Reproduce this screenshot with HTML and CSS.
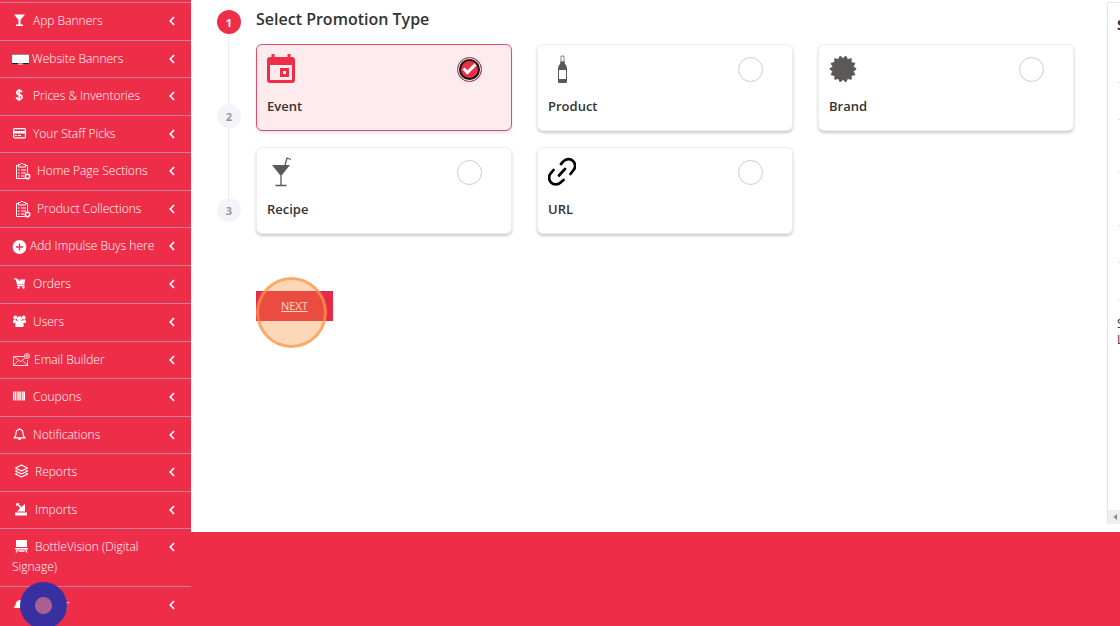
FILE: index.html
```html
<!DOCTYPE html>
<html lang="en">
<head>
  <meta charset="UTF-8">
  <meta name="viewport" content="width=device-width, initial-scale=1.0">
  <title>Promotions</title>
  <link rel="stylesheet" href="styles.css">
</head>
<body>
  <svg class="defs" aria-hidden="true">
    <symbol id="chevron" viewBox="0 0 6 10"><path d="M5 1 1.3 5 5 9" fill="none" stroke="currentColor" stroke-width="1.7"/></symbol>
    <symbol id="clipboard" viewBox="0 0 22 18">
      <g fill="none" stroke="currentColor">
        <path d="M13 16.5H4.5V3.5h2M13 3.5h2.500V11M6.500 5V2.500H8.500L10 1l1.500 1.500h2V5z"/>
        <path d="M6 8h1.500M9 8h5M6 11h1.500M9 11h5M6 14h1.500M9 14h3"/>
        <circle cx="15.500" cy="14.500" r="2.200" stroke-width="1.500"/>
      </g>
    </symbol>
  </svg>

  <div class="layout">
    <nav class="sidebar">
      <ul class="menu">
        <li><a href="#">
          <span class="label"><svg class="icon" viewBox="0 0 15 14"><path d="M2 1.500h11L8.500 7v4.500H11V13H4v-1.500h2.500V7z" fill="currentColor"/></svg>App Banners</span>
          <svg class="chevron"><use href="#chevron"/></svg></a></li>
        <li><a href="#">
          <span class="label"><svg class="icon icon-wide" viewBox="0 0 18 14"><path d="M0 3h17v10H0z" fill="#2b1a20"/><path d="M0 3.500h17v8.500H0z" fill="#fff"/><path d="M6 13h5" stroke="#fff"/></svg>Website Banners</span>
          <svg class="chevron"><use href="#chevron"/></svg></a></li>
        <li><a href="#">
          <span class="label"><svg class="icon" viewBox="0 0 15 14"><path d="M10 4.300C9.500 3 8.600 2.500 7.300 2.500c-3.300 0-3.300 3.700 0 4.200 3.500.6 3.500 4.500 0 4.500-1.500 0-2.600-.6-3-2M7.300 1v12" fill="none" stroke="currentColor" stroke-width="1.700"/></svg>Prices &amp; Inventories</span>
          <svg class="chevron"><use href="#chevron"/></svg></a></li>
        <li><a href="#">
          <span class="label"><svg class="icon" viewBox="0 0 15 14"><rect x="1.600" y="2.600" width="11.800" height="9.300" rx="1" fill="none" stroke="currentColor" stroke-width="1.200"/><path d="M1.500 5h12v2.500h-12zM3 9h2v1H3zM6 9h3v1H6z" fill="currentColor"/></svg>Your Staff Picks</span>
          <svg class="chevron"><use href="#chevron"/></svg></a></li>
        <li><a href="#">
          <span class="label"><svg class="icon icon-list"><use href="#clipboard"/></svg>Home Page Sections</span>
          <svg class="chevron"><use href="#chevron"/></svg></a></li>
        <li><a href="#">
          <span class="label"><svg class="icon icon-list"><use href="#clipboard"/></svg>Product Collections</span>
          <svg class="chevron"><use href="#chevron"/></svg></a></li>
        <li><a href="#">
          <span class="label"><svg class="icon icon-add" viewBox="0 0 16 14"><circle cx="7.500" cy="7" r="6.900" fill="currentColor"/><path d="M7.500 3.500v7M4 7h7" stroke="#ee2e49" stroke-width="1.300"/></svg>Add Impulse Buys here</span>
          <svg class="chevron"><use href="#chevron"/></svg></a></li>
        <li class="roomy"><a href="#">
          <span class="label"><svg class="icon" viewBox="0 0 15 14"><path d="M2 2.800h2.300L6 9.700h6.500" fill="none" stroke="currentColor" stroke-width="1.300"/><path d="M4.800 3.500h2.400V5h1V3.500h5L12.300 8.500H5.800z" fill="currentColor"/><circle cx="6.500" cy="11.600" r="1.200" fill="currentColor"/><circle cx="11.500" cy="11.600" r="1.200" fill="currentColor"/></svg>Orders</span>
          <svg class="chevron"><use href="#chevron"/></svg></a></li>
        <li><a href="#">
          <span class="label"><svg class="icon" viewBox="0 0 15 14"><g fill="currentColor"><circle cx="3.300" cy="3.500" r="1.900"/><circle cx="11.700" cy="3.500" r="1.900"/><circle cx="7.500" cy="4.700" r="2.500"/><path d="M1 9V7c0-1 1-1.600 2-1.500 1.500 1 2 1.500 2.500 2L4 9zM14 9V7c0-1-1-1.600-2-1.500-1.500 1-2 1.500-2.500 2L11 9z"/><path d="M3.300 11.500c0-3 .8-4.500 2.200-4.500h4c1.400 0 2.200 1.500 2.200 4.500 0 1-.7 1.500-1.500 1.500H4.800c-.8 0-1.500-.5-1.500-1.500z"/></g></svg>Users</span>
          <svg class="chevron"><use href="#chevron"/></svg></a></li>
        <li><a href="#">
          <span class="label"><svg class="icon icon-mail" viewBox="0 0 18 14"><g fill="none" stroke="currentColor" stroke-width=".8"><path d="M12 4.500H1.500v9h14V8M1.500 4.500l7 5 4.200-3M1.500 13.500l5-5M15.500 13.500l-5-5"/><circle cx="15" cy="4" r="2.500"/><circle cx="15" cy="4" r="1"/></g></svg>Email Builder</span>
          <svg class="chevron"><use href="#chevron"/></svg></a></li>
        <li><a href="#">
          <span class="label"><svg class="icon" viewBox="0 0 15 14"><path d="M1 2.500h1v9H1zM2.600 2.500h1.500v9H2.600zM4.700 2.500h1v9h-1zM6.200 2.500h1.500v9H6.200zM8.200 2.500h1v9h-1zM9.800 2.500h1v9h-1zM11.300 2.500H13v9h-1.700z" fill="currentColor"/></svg>Coupons</span>
          <svg class="chevron"><use href="#chevron"/></svg></a></li>
        <li><a href="#">
          <span class="label"><svg class="icon" viewBox="0 0 15 14"><path d="M2.300 10.800c1.400-1.300 1.800-2.800 1.800-5 0-2 1.400-3.300 3.400-3.300s3.400 1.300 3.400 3.300c0 2.200.4 3.700 1.800 5z" fill="none" stroke="currentColor" stroke-width="1.200"/><path d="M6.800 1h1.400v1.500H6.800zM5.800 11.500h3.400c-.3 2-3.100 2-3.400 0z" fill="currentColor"/></svg>Notifications</span>
          <svg class="chevron"><use href="#chevron"/></svg></a></li>
        <li><a href="#">
          <span class="label"><svg class="icon icon-large" viewBox="0 0 18 14"><g fill="none" stroke="currentColor" stroke-width="1.300" stroke-linejoin="round"><path d="m9.500 1 6 3-6 3-6-3zM4.800 6.200l-1.300.8 6 3 6-3-1.300-.8M4.800 9.200l-1.300.8 6 3 6-3-1.300-.8"/></g></svg>Reports</span>
          <svg class="chevron"><use href="#chevron"/></svg></a></li>
        <li><a href="#">
          <span class="label"><svg class="icon icon-large" viewBox="0 0 18 14"><path d="M3 10.500h12v3H3zM5 9.500 8.200 6 5.500 3.300 4 4V1.500L7.500 1l-.8 1.300L9.500 5 13 1.800V9.500z" fill="currentColor"/></svg>Imports</span>
          <svg class="chevron"><use href="#chevron"/></svg></a></li>
        <li><a href="#">
          <span class="label"><svg class="icon icon-large" viewBox="0 0 18 14"><path d="M4 1h11v7H4zM3 9h13v1.500H3z" fill="currentColor"/><path d="m6 10-2 3.500M13 10l2 3.500M6.500 12h6" stroke="currentColor" stroke-width="1.300"/></svg>BottleVision (Digital Signage)</span>
          <svg class="chevron"><use href="#chevron"/></svg></a></li>
        <li><a href="#">
          <span class="label"><svg class="icon icon-large" viewBox="0 0 18 14"><path d="M2 11c0-1.500.8-2 1.500-2.500C3.500 5 5.500 3 9 3s5.500 2 5.500 5.500V11z" fill="currentColor"/></svg>Server</span>
          <svg class="chevron"><use href="#chevron"/></svg></a></li>
      </ul>
    </nav>

    <main class="main">
      <section class="wizard">
        <ol class="steps">
          <li class="step active">1</li>
          <li class="step">2</li>
          <li class="step">3</li>
        </ol>
        <form class="step-content">
          <h1>Select Promotion Type</h1>
          <div class="cards">
            <label class="card selected" for="type-event">
              <span class="card-top">
                <svg class="card-icon" viewBox="0 0 28 30"><path d="M6 0v4M22 0v4" stroke="#ee2e49" stroke-width="3"/><path d="M3 3h22a3 3 0 0 1 3 3v20a3 3 0 0 1-3 3H3a3 3 0 0 1-3-3V6a3 3 0 0 1 3-3zm0 8v15h22V11zm10 3h9v9h-9zm3 3v3h3v-3z" fill="#ee2e49" fill-rule="evenodd"/></svg>
                <input type="radio" name="type" id="type-event" checked>
              </span>
              <span class="card-name">Event</span>
            </label>
            <label class="card" for="type-product">
              <span class="card-top">
                <svg class="card-icon" viewBox="0 0 28 30"><path d="M13 2h3v6h-3z" fill="#fff" stroke="#666" stroke-width=".8"/><path d="M12.500 7.500h4c0 3 2.500 4 2.500 7V28q0 1-1 1h-7q-1 0-1-1V14.500c0-3 2.500-4 2.500-7z" fill="#5c5858"/><path d="M11 16h7v9h-7z" fill="#fff"/></svg>
                <input type="radio" name="type" id="type-product">
              </span>
              <span class="card-name">Product</span>
            </label>
            <label class="card" for="type-brand">
              <span class="card-top">
                <svg class="card-icon" viewBox="0 0 28 30"><path d="M0-10.400 2.900-12.900 4.500-9.400 8.200-10.300 8.100-6.500 11.900-5.700 10.100-2.300 13.200 0 10.100 2.300 11.900 5.700 8.100 6.500 8.200 10.300 4.500 9.400 2.900 12.900 0 10.400-2.900 12.900-4.500 9.400-8.200 10.300-8.100 6.500-11.900 5.700-10.100 2.300-13.200 0-10.100-2.300-11.900-5.700-8.100-6.500-8.200-10.300-4.500-9.400-2.900-12.900z" transform="translate(14 15)" fill="#5c5858" stroke="#5c5858" stroke-linejoin="round"/></svg>
                <input type="radio" name="type" id="type-brand">
              </span>
              <span class="card-name">Brand</span>
            </label>
            <label class="card" for="type-recipe">
              <span class="card-top">
                <svg class="card-icon" viewBox="0 0 28 30"><path d="M5 8h18l-8 10h-2z" fill="#5c5858"/><path d="M14 17v11M8.500 28.500h11M18 8l2-7 4 1.500" fill="none" stroke="#5c5858" stroke-width="1.300"/></svg>
                <input type="radio" name="type" id="type-recipe">
              </span>
              <span class="card-name">Recipe</span>
            </label>
            <label class="card" for="type-url">
              <span class="card-top">
                <svg class="card-icon" viewBox="0 0 28 30"><path d="M13 7l2.600-2.800a6.500 6.500 0 0 1 9.700 9.100L22.500 17M5.500 13l-2.400 2.900a6.500 6.500 0 0 0 9.500 9.600L15.500 23M11 18.500l6-6.500" fill="none" stroke="#000" stroke-width="2.700" stroke-linecap="round"/></svg>
                <input type="radio" name="type" id="type-url">
              </span>
              <span class="card-name">URL</span>
            </label>
          </div>
          <div class="actions">
            <a class="next" href="#">NEXT</a>
            <span class="click-marker"></span>
          </div>
        </form>
      </section>

      <aside class="preview">
        <div class="preview-body">
          <h2>Summary</h2>
          <div class="row"></div>
          <div class="row"></div>
          <div class="row tall"></div>
          <div class="row tall"></div>
          <div class="row"></div>
          <div class="row"></div>
          <p>Start date<br>Location</p>
        </div>
        <div class="scrollbar"><svg viewBox="0 0 14 14"><path d="M9 4v6L5.500 7z" fill="#888"/></svg></div>
      </aside>
    </main>
  </div>

  <button class="recorder" type="button" aria-label="Recorder"></button>
</body>
</html>
```

FILE: styles.css
```css
* {
  box-sizing: border-box;
}
body {
  margin: 0;
  height: 100vh;
  overflow: hidden;
  background: #ee2e49;
  color: #333;
  font-family: "Open Sans", sans-serif;
  font-size: 12px;
}
.defs {
  position: absolute;
  width: 0;
  height: 0;
}
.layout {
  display: flex;
  align-items: flex-start;
}

/* sidebar */
.sidebar {
  flex: 0 0 191px;
}
.menu {
  list-style: none;
  margin: 0;
  padding: 2px 0 0;
}
.menu li {
  border-top: 1px solid #c77f99;
}
.menu a {
  display: flex;
  padding: 8px 16px 8px 12px;
  color: #fff;
  font-weight: 300;
  line-height: 20px;
  text-decoration: none;
}
.menu li:nth-child(odd) a,
.menu .roomy a {
  padding-bottom: 9px;
}
.label {
  flex: 1;
}
.icon {
  width: 15px;
  height: 14px;
  margin-right: 6px;
  vertical-align: -2px;
}
.icon-wide {
  width: 18px;
  margin-right: 2px;
}
.icon-mail {
  width: 18px;
  margin-right: 4px;
}
.icon-list {
  width: 22px;
  height: 18px;
  margin-right: 3px;
  vertical-align: -5px;
}
.icon-add {
  width: 16px;
  margin-right: 2px;
  vertical-align: -4px;
}
.icon-large {
  width: 18px;
  margin-right: 5px;
}
.chevron {
  width: 6px;
  height: 10px;
  margin-top: 5px;
}

/* main area */
.main {
  flex: 1;
  display: flex;
  min-width: 0;
  min-height: 85vh;
  overflow: hidden;
  background: #fff;
}
.wizard {
  flex: 1;
  display: flex;
  align-items: flex-start;
  gap: 15px;
  padding: 10px 33px 0 26px;
}
.steps {
  list-style: none;
  margin: 0;
  padding: 0;
}
.step {
  position: relative;
  width: 24px;
  height: 24px;
  margin-bottom: 70px;
  border-radius: 50%;
  background: #f3f4fa;
  color: #999;
  font-size: 11px;
  font-weight: 700;
  line-height: 26px;
  text-align: center;
}
.step.active {
  background: #ee2e49;
  color: #fff;
}
.step:not(:last-child)::after {
  content: "";
  position: absolute;
  top: 24px;
  left: 11px;
  width: 1px;
  height: 70px;
  background: #e8e8ee;
}
.step-content {
  flex: 1;
}
h1 {
  margin: 0 0 16px;
  font-size: 16px;
  font-weight: 600;
  line-height: 18px;
}
.cards {
  display: grid;
  grid-template-columns: repeat(3, 1fr);
  gap: 16px 25px;
}
.card {
  padding: 9px 29px 14px 10px;
  border: 1px solid #eee;
  border-radius: 6px;
  background: #fff;
  box-shadow: 0 2px 3px rgba(0, 0, 0, 0.2);
}
.card.selected {
  border-color: #d9506c;
  background: #feebee;
  box-shadow: 0 2px 3px rgba(0, 0, 0, 0.1);
}
.card-top {
  display: flex;
  justify-content: space-between;
  align-items: center;
}
.card-icon {
  width: 28px;
  height: 30px;
}
.card input {
  appearance: none;
  width: 25px;
  height: 25px;
  margin: 0;
  border: 1px solid #ccc;
  border-radius: 50%;
}
.card input:checked {
  position: relative;
  border-color: #a04055;
  background: #ee2e49;
  box-shadow: inset 0 0 0 1px #feebee, inset 0 0 0 3px #111;
}
.card input:checked::after {
  content: "";
  position: absolute;
  top: 6px;
  left: 5px;
  width: 10px;
  height: 4px;
  border: solid #fff;
  border-width: 0 0 3px 3px;
  transform: rotate(-45deg);
}
.card-name {
  display: block;
  margin-top: 12px;
  font-size: 13px;
  font-weight: 600;
  line-height: 20px;
}
.actions {
  position: relative;
  margin-top: 57px;
}
.next {
  display: inline-block;
  padding: 0 25px;
  background: #e62b49;
  color: #fff;
  font-size: 11px;
  line-height: 30px;
}
.click-marker {
  position: absolute;
  top: -14px;
  left: 0;
  width: 71px;
  height: 71px;
  border: 3px solid rgba(250, 150, 70, 0.7);
  border-radius: 50%;
  background: rgba(247, 140, 50, 0.34);
}

/* preview runs past the right edge */
.preview {
  flex: 0 0 260px;
  display: flex;
  flex-direction: column;
  margin: 2px -247px 8px 0;
  border: 1px solid #e6e6e6;
  border-width: 1px 0 0 1px;
}
.preview-body {
  flex: 1;
  padding: 12px 10px 0 9px;
}
h2 {
  margin: 0 0 11px;
  font-size: 14px;
  line-height: 20px;
}
.row {
  height: 37px;
  margin-left: 1px;
  border-bottom: 1px solid #e2e2e2;
}
.row.tall {
  height: 53px;
}
.preview p {
  margin: 16px 0 0;
  font-size: 12px;
  line-height: 16px;
}
.scrollbar {
  height: 14px;
  background: #eee;
}
.scrollbar svg {
  display: block;
  width: 14px;
  height: 14px;
}

.recorder {
  position: fixed;
  bottom: -3px;
  left: 20px;
  width: 47px;
  height: 47px;
  padding: 0;
  border: 0;
  border-radius: 50%;
  background: radial-gradient(circle, #a8608f 8px, #382fa0 9px);
}
```
